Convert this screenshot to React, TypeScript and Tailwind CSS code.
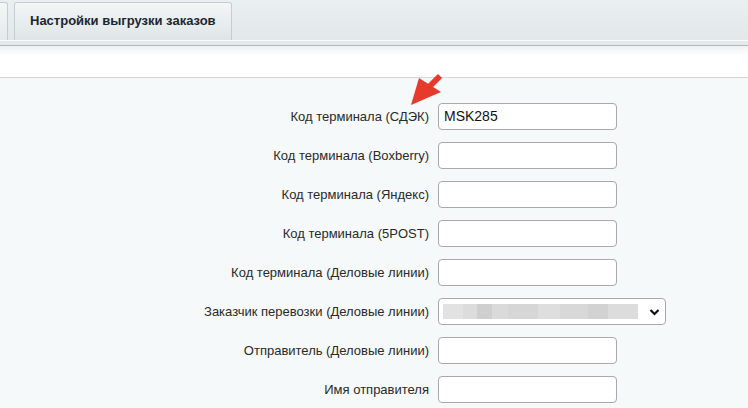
// Order export settings tab — terminal codes form (admin panel look).

const FONT = 'font-["Liberation_Sans",Arial,sans-serif]';

const FIELDS: { label: string; value?: string; kind?: 'select' }[] = [
  { label: 'Код терминала (СДЭК)', value: 'MSK285' },
  { label: 'Код терминала (Boxberry)' },
  { label: 'Код терминала (Яндекс)' },
  { label: 'Код терминала (5POST)' },
  { label: 'Код терминала (Деловые линии)' },
  { label: 'Заказчик перевозки (Деловые линии)', kind: 'select' },
  { label: 'Отправитель (Деловые линии)' },
  { label: 'Имя отправителя' },
];

// blurred placeholder in the select — rough pixel blocks
const BLUR = [
  { w: 20, c: 'bg-[#e2e2e2]' },
  { w: 14, c: 'bg-[#dcdcdc]' },
  { w: 15, c: 'bg-[#cfcfcf]' },
  { w: 16, c: 'bg-[#dadada]' },
  { w: 30, c: 'bg-[#d6d6d6]' },
  { w: 22, c: 'bg-[#dedede]' },
  { w: 28, c: 'bg-[#d8d8d8]' },
  { w: 20, c: 'bg-[#d2d2d2]' },
  { w: 30, c: 'bg-[#dcdcdc]' },
];

function TextInput({ value }: { value?: string }) {
  return (
    <div className="flex h-[27px] w-[179px] items-center rounded-[4px] border border-[#a9a9a9] bg-white px-[5px] text-[14px] text-[#111]">
      {value}
    </div>
  );
}

function BlurSelect() {
  return (
    <div className="flex h-[27px] w-[228px] items-center rounded-[4px] border border-[#a9a9a9] bg-white pl-[4px] pr-[5px]">
      <div className="flex h-[15px] w-[195px] shrink-0 overflow-hidden">
        {BLUR.map((b, i) => (
          <div key={i} className={`h-full shrink-0 ${b.c}`} style={{ width: b.w }} />
        ))}
      </div>
      <svg width="11" height="8" viewBox="0 0 11 8" className="ml-auto shrink-0">
        <path d="M1.5 2 L5.5 6 L9.5 2" fill="none" stroke="#111" strokeWidth="2.2" />
      </svg>
    </div>
  );
}

export default function App() {
  return (
    <div className={`relative h-[408px] w-[748px] overflow-hidden bg-[#f5f9f9] ${FONT}`}>
      {/* tab strip */}
      <div className="flex h-[40px] items-end bg-gradient-to-b from-[#eaeff1] to-[#e2e8ea]">
        <div className="h-[38px] w-[8px] rounded-tr-[3px] border-r border-t border-[#c6cdd0] bg-gradient-to-b from-[#f4f7f8] to-[#e4e9eb]" />
        <div className="ml-[6px] flex h-[38px] w-[218px] items-center rounded-t-[3px] border-x border-t border-[#c6cdd0] bg-gradient-to-b from-[#f3f6f7] to-[#dfe5e7] pb-[1px] pl-[15px] text-[13px] font-bold text-[#1d2630]">
          Настройки выгрузки заказов
        </div>
      </div>
      {/* toolbar band */}
      <div className="h-[6px] border-t border-[#fafcfc] border-b border-b-[#b3babd] bg-[#e4eaec]" />
      <div className="h-[32px] bg-gradient-to-b from-[#eef1f2] to-white to-[30%] border-b border-[#d3d8da]" />

      {/* form */}
      <div className="pt-[19px]">
        {FIELDS.map((f) => (
          <div key={f.label} className="grid h-[39px] grid-cols-[429px_auto] items-center gap-x-[9px]">
            <div className="text-right text-[13px] text-[#2a2a2a]">{f.label}</div>
            {f.kind === 'select' ? <BlurSelect /> : <TextInput value={f.value} />}
          </div>
        ))}
      </div>

      {/* annotation arrow */}
      <svg className="absolute left-[405px] top-[70px]" width="45" height="40" viewBox="405 70 45 40">
        <path d="M428 88 L440 76" stroke="#e63a2c" strokeWidth="6" strokeLinecap="butt" />
        <polygon points="411,105 419,78 441,92" fill="#e63a2c" />
      </svg>
    </div>
  );
}
